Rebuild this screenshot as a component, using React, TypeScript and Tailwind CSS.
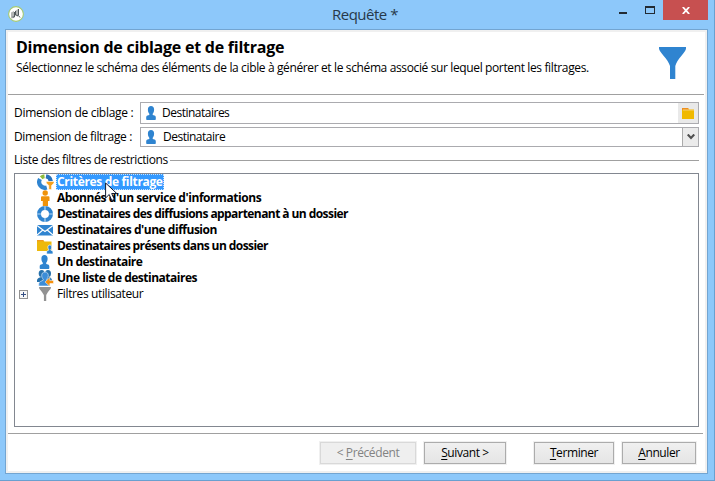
import type { ReactNode } from "react";

function Person({ className = "", fill = "#2f84d0" }: { className?: string; fill?: string }) {
  return (
    <svg viewBox="0 0 10 14" className={`shrink-0 ${className}`} fill={fill}>
      <path d="M5 0C3 0 1.900 1.400 1.900 3.400c0 2 .6 3.400 1.400 4.300V9L1.500 9.600C.6 9.900.2 10.600.2 11.500V13c0 .7.4 1 1 1h7.600c.6 0 1-.3 1-1v-1.500c0-.9-.4-1.600-1.300-1.900L6.700 9V7.700C7.500 6.800 8.100 5.400 8.100 3.400 8.100 1.400 7 0 5 0Z" />
    </svg>
  );
}

function Funnel({ fill, className }: { fill: string; className: string }) {
  return (
    <svg viewBox="0 0 27 32" className={`shrink-0 ${className}`} fill={fill}>
      <path d="M0 0H27V1.500C27 5 18 12 16.300 19V32H11V19C9 12 0 5 0 1.500Z" />
    </svg>
  );
}

function Criteria() {
  return (
    <svg viewBox="0 0 17 16" className="h-4 w-[17px]">
      <path d="M7.500 2.200A5.800 5.800 0 0 0 4.200 3.700" fill="none" stroke="#8dbb3c" strokeWidth="4" />
      <path d="M9 2.200A5.800 5.800 0 0 1 13.800 7.200" fill="none" stroke="#2772bd" strokeWidth="4.200" />
      <path d="M3 5A5.900 5.900 0 0 0 9.800 13.600" fill="none" stroke="#2f84d0" strokeWidth="4.200" />
      <path d="M9.300 7.500H17V9L14.500 11.500V15.500H11.800V11.500L9.300 9Z" fill="#f5a11d" stroke="#fff" strokeWidth=".5" />
    </svg>
  );
}

function Ring() {
  return (
    <svg viewBox="0 0 17 16" className="h-4 w-[17px]">
      <circle cx="8" cy="8" r="6" fill="none" stroke="#2f84d0" strokeWidth="4" />
      <path d="M8 0V4M8 12V16M0 8H4M12 8H16" stroke="#b5d6f1" strokeWidth="1.200" />
    </svg>
  );
}

function Envelope() {
  return (
    <svg viewBox="0 0 17 16" className="h-4 w-[17px]">
      <rect x="0" y="3" width="16" height="10.500" fill="#2f84d0" />
      <path d="M0 3.500L8 9.500L16 3.500M0 13L5.800 8M16 13L10.200 8" fill="none" stroke="#fff" strokeWidth="1.100" />
    </svg>
  );
}

function FolderPerson() {
  return (
    <svg viewBox="0 0 17 16" className="h-4 w-[17px]">
      <path d="M0 2H6L7.500 3.500H14.500V13H0Z" fill="#edb90b" />
      <path d="M0 2H6L7 3.300H0Z" fill="#ef9820" />
      <path d="M12.800 7c-1.300 0-1.900.9-1.900 2.200 0 1 .3 1.700.8 2.200v.8l-1.300.5c-.5.2-.8.600-.8 1.200V16h6.400v-2.100c0-.6-.3-1-.8-1.200l-1.300-.5v-.8c.5-.5.8-1.200.8-2.200 0-1.300-.6-2.200-1.900-2.200Z" fill="#2f84d0" stroke="#fff" strokeWidth=".7" />
    </svg>
  );
}

function PeopleList() {
  return (
    <svg viewBox="0 0 17 16" className="h-4 w-[17px]">
      <g fill="#2772ad">
        <ellipse cx="4.700" cy="3.500" rx="3" ry="3.500" />
        <ellipse cx="11" cy="3.500" rx="3" ry="3.500" />
        <path d="M0 12V9.500Q1 7.500 4 7L12 7Q14.500 7.500 15 10V12Z" />
      </g>
      <path d="M8 2c-2.200 0-3.300 1.400-3.300 3.500 0 1.700.7 2.900 1.500 3.700v1L3.300 11.600C2.300 12 1.800 13 1.800 14v2h11v-2.500c0-1-.5-1.800-1.500-2.200L9.800 10.200v-1c.8-.8 1.500-2 1.500-3.700C11.300 3.400 10.200 2 8 2Z" fill="#3c8dd8" stroke="#e7f2fb" strokeWidth=".6" />
      <path d="M8 12L12.800 7.500V10.500H16.500V13.500H12.800V16.300Z" fill="#f5900e" stroke="#fff" strokeWidth=".5" />
    </svg>
  );
}

function Subscriber() {
  return (
    <svg viewBox="0 0 17 16" className="h-4 w-[17px]" fill="#ef930b">
      <circle cx="8.200" cy="3" r="2.700" />
      <path d="M5 6.300H11.500Q12.500 6.300 12.500 7.300V11H11V16H5.800V11H4V7.300Q4 6.300 5 6.300Z" />
    </svg>
  );
}

const rows: { icon: ReactNode; label: string; style: string; expand?: boolean }[] = [
  { icon: <Criteria />, label: "Critères de filtrage", style: "font-bold tracking-[-0.33px]" },
  { icon: <Subscriber />, label: "Abonnés d'un service d'informations", style: "font-bold tracking-[-0.43px]" },
  { icon: <Ring />, label: "Destinataires des diffusions appartenant à un dossier", style: "font-bold tracking-[-0.57px]" },
  { icon: <Envelope />, label: "Destinataires d'une diffusion", style: "font-bold tracking-[-0.48px]" },
  { icon: <FolderPerson />, label: "Destinataires présents dans un dossier", style: "font-bold tracking-[-0.58px]" },
  { icon: <Person className="ml-[2px] h-[14px] w-[11px]" />, label: "Un destinataire", style: "font-bold tracking-[-0.54px]" },
  { icon: <PeopleList />, label: "Une liste de destinataires", style: "font-bold tracking-[-0.5px]" },
  { icon: <Funnel fill="#929292" className="ml-[2px] h-[14px] w-[12px]" />, label: "Filtres utilisateur", style: "tracking-[-0.37px]", expand: true },
];

function Button({ first, rest, before = "", className, disabled = false }: { first: string; rest: string; before?: string; className: string; disabled?: boolean }) {
  const tone = disabled
    ? "border-[#d9d9d9] bg-[#efefef] text-[#838383]"
    : "border-[#acacac] bg-linear-to-b from-[#f0f0f0] to-[#e5e5e5] text-black";
  return (
    <button className={`flex h-[22px] items-center justify-center border whitespace-pre outline outline-[#f0f0f0] ${tone} ${className}`}>
      <span>{before}<span className="underline decoration-1 underline-offset-2">{first}</span>{rest}</span>
    </button>
  );
}

export default function App() {
  return (
    <div className="relative flex h-[481px] w-[715px] flex-col overflow-hidden border-r border-b border-[#69a0d0] bg-[#8dc8fa] pr-[6px] pb-[6px] pl-[5px] font-['Open_Sans','Noto_Sans',sans-serif] text-[12px] leading-4 text-black">
      <header className="flex h-[29px] shrink-0 items-start">
        <svg viewBox="0 0 16 16" className="mt-[6px] ml-[3px] h-4 w-4 shrink-0">
          <circle cx="8" cy="8" r="7.400" fill="#fff" stroke="#a4c973" strokeWidth="1.100" />
          <path d="M3 6.500L6 5V12L3 12.500ZM7 5L10 3V11L7 9Z" fill="#b3b6b5" />
          <path d="M6.500 6V11H4.500M10.500 3V9.500L12 11.500M7.500 5V9L10 9.500" stroke="#50595c" fill="none" strokeWidth="1" />
        </svg>
        <div className="mt-[4px] ml-[308px] w-[70px] text-[15px] leading-5 tracking-[-0.5px] whitespace-nowrap text-[#273849]">Requête *</div>
        <div className="ml-auto flex h-5">
          <div className="mt-[12px] mr-[18px] h-[2px] w-2 bg-[#222b33]" />
          <div className="mt-[6px] mr-[8px] h-[8px] w-[10px] border border-t-2 border-[#222b33]" />
          <div className="flex w-[45px] items-center justify-center bg-[#c75050]">
            <svg viewBox="0 0 8 7" className="h-[7px] w-2"><path d="M.8 0L7.200 7M7.200 0L.8 7" stroke="white" strokeWidth="1.800" /></svg>
          </div>
        </div>
      </header>

      <main className="flex min-h-0 flex-1 flex-col border border-[#73a5d1] bg-[#f0f0f0] p-[2px]">
        <div className="flex min-h-0 flex-1 flex-col bg-white">
          <section className="mr-px flex h-[63px] shrink-0 justify-between border-b border-[#a0a0a0] pr-[18px] pl-[8px]">
            <div className="whitespace-nowrap">
              <h1 className="mt-[5px] text-[16px] leading-5 font-bold tracking-[-0.24px]">Dimension de ciblage et de filtrage</h1>
              <p className="mt-[3px] tracking-[-0.37px]">Sélectionnez le schéma des éléments de la cible à générer et le schéma associé sur lequel portent les filtrages.</p>
            </div>
            <Funnel fill="#2f84d0" className="mt-[15px] h-8 w-[27px]" />
          </section>

          <section className="flex flex-1 flex-col pr-[6px] pl-[6px]">
            <div className="mt-[7px] flex h-[22px] items-center">
              <label className="w-[126px] tracking-[-0.3px] whitespace-nowrap">Dimension de ciblage :</label>
              <div className="flex h-full flex-1 items-center border border-[#ababaf] pl-[5px]">
                <Person className="h-[14px] w-[10px]" />
                <span className="ml-[6px] pb-px tracking-[-0.5px]">Destinataires</span>
                <div className="ml-auto flex h-full w-5 items-center justify-center bg-[#e9e9e9]">
                  <svg viewBox="0 0 12 11" className="h-[11px] w-3"><path d="M0 0H6L7 1.500H12V11H0Z" fill="#f0b900" /><path d="M0 0H6L7 2H0Z" fill="#ec8f20" /><path d="M1 1.500H12V2.500H1Z" fill="#f8d078" /></svg>
                </div>
              </div>
            </div>
            <div className="mt-[3px] flex h-[20px] items-center">
              <label className="w-[126px] pb-px tracking-[-0.35px] whitespace-nowrap">Dimension de filtrage :</label>
              <div className="flex h-full flex-1 items-center border border-[#ababaf] pl-[5px]">
                <Person className="h-[14px] w-[10px]" />
                <span className="ml-[7px] tracking-[-0.5px]">Destinataire</span>
                <div className="ml-auto flex h-full w-4 items-center justify-center border-l border-[#ababab] bg-[#ebebeb]">
                  <svg viewBox="0 0 8 6" className="h-[6px] w-2"><path d="M.7.5L4 4L7.300.5" fill="none" stroke="#505050" strokeWidth="2.200" /></svg>
                </div>
              </div>
            </div>
            <div className="mt-[5px] flex h-4 items-center gap-[2px]">
              <span className="tracking-[-0.4px] whitespace-nowrap">Liste des filtres de restrictions</span>
              <div className="mt-px h-px flex-1 bg-[#a0a0a0]" />
            </div>
            <div className="mt-[5px] h-[254px] border border-[#828790]">
              {rows.map((row, i) => (
                <div key={row.label} className="flex h-4 items-center">
                  <div className="flex w-[22px] pl-1">
                    {row.expand && <svg viewBox="0 0 9 9" className="size-[9px]"><rect x=".5" y=".5" width="8" height="8" fill="#f7f7f7" stroke="#929292" /><path d="M2 4.500H7M4.500 2V7" stroke="#354f83" /></svg>}
                  </div>
                  <div className="flex h-4 w-[19px] items-center">{row.icon}</div>
                  <span className={`flex h-4 items-center px-px whitespace-nowrap ${row.style} ${i === 0 ? "bg-[#3399ff] text-white outline-1 -outline-offset-1 outline-dotted outline-[#c5e2ff]" : ""}`}>{row.label}</span>
                </div>
              ))}
            </div>
          </section>

          <footer className="mr-[2px] flex h-[38px] shrink-0 items-start justify-end border-t border-[#a0a0a0] pt-2 pr-[7px] tracking-[-0.4px]">
            <Button before="< " first="P" rest="récédent" disabled className="w-[96px]" />
            <Button first="S" rest="uivant >" className="ml-[8px] w-[82px]" />
            <Button first="T" rest="erminer" className="ml-[28px] w-[80px]" />
            <Button first="A" rest="nnuler" className="ml-[8px] w-[74px]" />
          </footer>
        </div>
      </main>

      <svg viewBox="0 0 13 20" className="absolute top-[182px] left-[105px] h-5 w-[13px]">
        <path d="M.6 1V16L4.200 12.500L6.800 18.500L9.300 17.400L6.700 11.500H11.800Z" fill="white" stroke="#111b31" strokeWidth="1" />
      </svg>
    </div>
  );
}
